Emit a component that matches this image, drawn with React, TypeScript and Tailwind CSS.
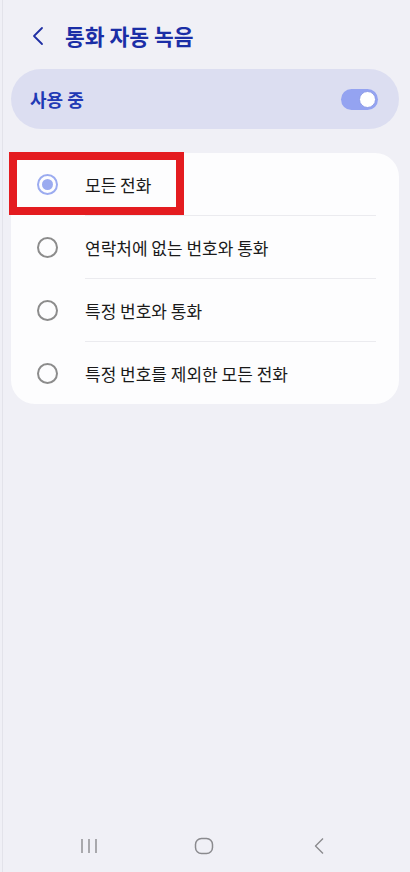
import React from "react";

const items = [
  { label: "모든 전화", checked: true },
  { label: "연락처에 없는 번호와 통화", checked: false },
  { label: "특정 번호와 통화", checked: false },
  { label: "특정 번호를 제외한 모든 전화", checked: false },
];

export default function App() {
  return (
    <div
      className="relative w-[410px] h-[872px] bg-[#f0f0f6] flex flex-col overflow-hidden"
      style={{ fontFamily: '"Noto Sans CJK KR", "Noto Sans", sans-serif' }}
    >
      <div className="absolute left-[2px] top-0 h-full w-[1px] bg-[#e3e3ea]" />
      {/* Header */}
      <div className="flex items-center h-[36px] mt-[18px] pl-[31px]">
        <svg width="14" height="20" viewBox="0 0 14 20" className="mr-[20px]">
          <path d="M11 2 L3 10 L11 18" fill="none" stroke="#1f2fa3" strokeWidth="1.8" strokeLinecap="round" strokeLinejoin="round" />
        </svg>
        <span className="text-[21.5px] font-bold text-[#1a2ea6] leading-none">통화 자동 녹음</span>
      </div>

      {/* Master switch */}
      <div className="mx-[11px] mt-[15px] h-[60px] rounded-full bg-[#dcdef1] flex items-center justify-between pl-[19px] pr-[21px]">
        <span className="text-[18px] font-bold text-[#2139b5] leading-none">사용 중</span>
        <div className="w-[37px] h-[21px] rounded-full bg-[#94a3f1] flex items-center justify-end pr-[2px]">
          <div className="w-[17px] h-[17px] rounded-full bg-white border border-[#8d9ce8]" />
        </div>
      </div>

      {/* Options card */}
      <div className="mx-[11px] mt-[24px] bg-[#fdfdfe] rounded-[24px] flex flex-col">
        {items.map((it, i) => (
          <div key={i} className="flex flex-col">
            {i > 0 && <div className="ml-[74px] mr-[23px] h-[1px] bg-[#ebebef]" />}
            <div className="h-[62px] flex items-center pl-[26px]">
              {it.checked ? (
                <div className="w-[21px] h-[21px] rounded-full border-2 border-[#9babf0] flex items-center justify-center">
                  <div className="w-[11px] h-[11px] rounded-full bg-[#9babf0]" />
                </div>
              ) : (
                <div className="w-[21px] h-[21px] rounded-full border-2 border-[#8c8c8c]" />
              )}
              <span className="ml-[27px] text-[17px] text-[#1a1a1a] leading-none">{it.label}</span>
            </div>
          </div>
        ))}
      </div>

      {/* Red highlight box */}
      <div className="absolute left-[9px] top-[152px] w-[175px] h-[63px] border-[8px] border-[#e41c20]" />

      {/* Nav bar */}
      <div className="mt-auto h-[46px] mb-[3px] flex items-center pl-[69px] gap-[75px]">
        <div className="w-[40px] flex justify-center">
          <svg width="18" height="16" viewBox="0 0 18 16">
            <path d="M2 1 V15 M9 1 V15 M16 1 V15" stroke="#8a8a8e" strokeWidth="1.4" />
          </svg>
        </div>
        <div className="w-[40px] flex justify-center">
          <svg width="20" height="18" viewBox="0 0 20 18">
            <rect x="1.5" y="1.5" width="17" height="15" rx="6" fill="none" stroke="#8a8a8e" strokeWidth="1.5" />
          </svg>
        </div>
        <div className="w-[40px] flex justify-center">
          <svg width="14" height="18" viewBox="0 0 14 18">
            <path d="M11 1.5 L3.5 9 L11 16.5" fill="none" stroke="#8a8a8e" strokeWidth="1.4" strokeLinejoin="round" />
          </svg>
        </div>
      </div>
    </div>
  );
}
